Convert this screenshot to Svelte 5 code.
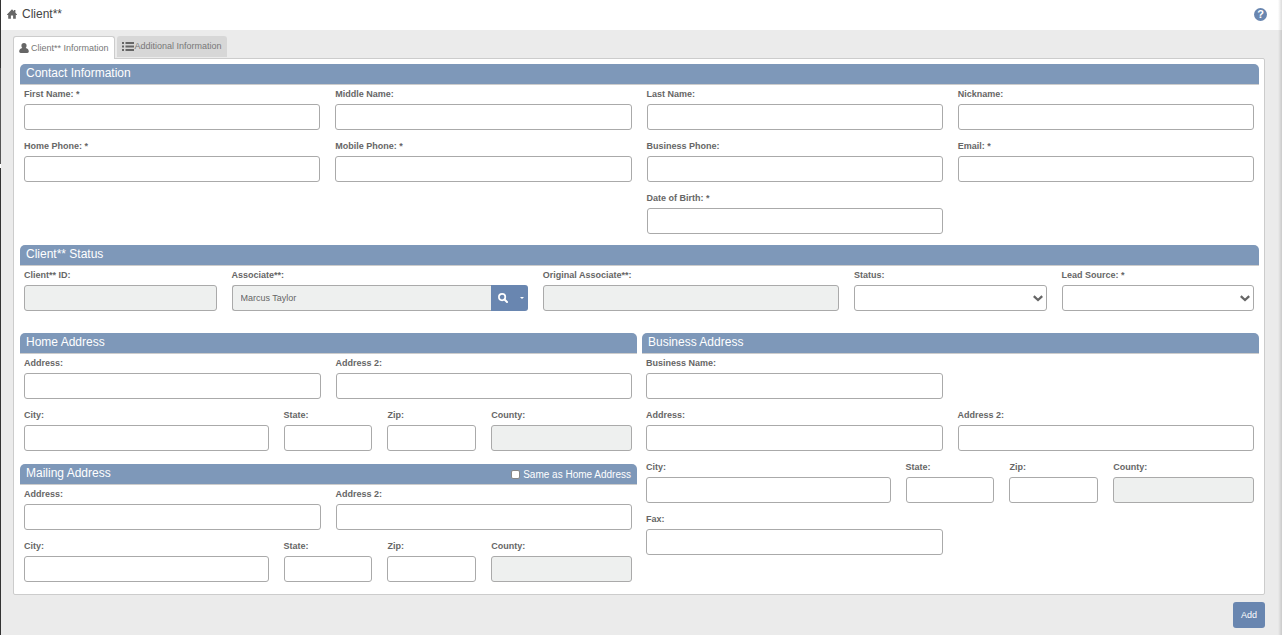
<script lang="ts">
    type Field = {
        id: string;
        label: string;
        span: number;
        start?: number;
        kind?: "text" | "readonly" | "select" | "lookup";
        value?: string;
    };

    const contactFields: Field[] = [
        { id: "first-name", label: "First Name: *", span: 6 },
        { id: "middle-name", label: "Middle Name:", span: 6 },
        { id: "last-name", label: "Last Name:", span: 6 },
        { id: "nickname", label: "Nickname:", span: 6 },
        { id: "home-phone", label: "Home Phone: *", span: 6 },
        { id: "mobile-phone", label: "Mobile Phone: *", span: 6 },
        { id: "business-phone", label: "Business Phone:", span: 6 },
        { id: "email", label: "Email: *", span: 6 },
        { id: "birth-date", label: "Date of Birth: *", span: 6, start: 13 },
    ];

    const statusFields: Field[] = [
        { id: "client-id", label: "Client** ID:", span: 4, kind: "readonly" },
        { id: "associate", label: "Associate**:", span: 6, kind: "lookup", value: "Marcus Taylor" },
        { id: "original-associate", label: "Original Associate**:", span: 6, kind: "readonly" },
        { id: "status", label: "Status:", span: 4, kind: "select" },
        { id: "lead-source", label: "Lead Source: *", span: 4, kind: "select" },
    ];

    function cityFields(prefix: string): Field[] {
        return [
            { id: prefix + "-city", label: "City:", span: 5 },
            { id: prefix + "-state", label: "State:", span: 2 },
            { id: prefix + "-zip", label: "Zip:", span: 2 },
            { id: prefix + "-county", label: "County:", span: 3, kind: "readonly" },
        ];
    }

    function addressFields(prefix: string): Field[] {
        return [
            { id: prefix + "-address", label: "Address:", span: 6 },
            { id: prefix + "-address2", label: "Address 2:", span: 6 },
            ...cityFields(prefix),
        ];
    }

    const businessFields: Field[] = [
        { id: "business-name", label: "Business Name:", span: 6 },
        { id: "business-address", label: "Address:", span: 6, start: 1 },
        { id: "business-address2", label: "Address 2:", span: 6 },
        ...cityFields("business"),
        { id: "business-fax", label: "Fax:", span: 6 },
    ];

    let activeTab = $state("client");
    let sameAsHome = $state(false);
</script>

{#snippet fieldGrid(fields: Field[], columns: number)}
    <div class="fields" style="--columns: {columns}">
        {#each fields as field (field.id)}
            <div class="field" style="grid-column: {field.start ?? 'auto'} / span {field.span}">
                <label for={field.id}>{field.label}</label>
                {#if field.kind === "select"}
                    <div class="select">
                        <select id={field.id}>
                            <option value=""></option>
                        </select>
                        <svg viewBox="0 0 10 7" aria-hidden="true">
                            <path d="M.8 1.2 5 5 9.2 1.2" fill="none" stroke="#666" stroke-width="2.3" />
                        </svg>
                    </div>
                {:else if field.kind === "lookup"}
                    <div class="lookup">
                        <input id={field.id} type="text" value={field.value} readonly />
                        <button type="button" class="search" aria-label="Search">
                            <svg viewBox="0 0 10 10" aria-hidden="true">
                                <circle cx="4.1" cy="4.1" r="3.2" fill="none" stroke="#fff" stroke-width="1.7" />
                                <path d="M6.5 6.5 9 9" stroke="#fff" stroke-width="2" stroke-linecap="round" />
                            </svg>
                        </button>
                        <button type="button" class="more" aria-label="More options">
                            <svg viewBox="0 0 4 2" aria-hidden="true">
                                <path d="M0 0h4L2 2z" fill="#fff" />
                            </svg>
                        </button>
                    </div>
                {:else}
                    <input id={field.id} type="text" value={field.value ?? ""} readonly={field.kind === "readonly"} />
                {/if}
            </div>
        {/each}
    </div>
{/snippet}

<div class="page">
    <header>
        <svg class="home" viewBox="0 0 10 10" aria-hidden="true">
            <path d="M5 .3 6.9 2.2V1h1.5v2.7L10 5.4V6H8.8v3.7H6.1V6.5H3.9v3.2H1.2V6H0v-.6z" fill="#666" />
        </svg>
        <h1>Client**</h1>
        <button type="button" class="help" aria-label="Help">?</button>
    </header>

    <main>
        <div class="tabs" role="tablist">
            <button type="button" role="tab" class:active={activeTab === "client"} aria-selected={activeTab === "client"} onclick={() => (activeTab = "client")}>
                <svg class="user" viewBox="0 0 10 10" aria-hidden="true">
                    <path d="M5 0C3.4 0 2.4 1.1 2.4 2.7c0 1 .3 1.8.9 2.4C1.2 5.6.2 6.7.2 8.6c0 .9.6 1.4 1.4 1.4h6.8c.8 0 1.4-.5 1.4-1.4 0-1.9-1-3-3.1-3.5.6-.6.9-1.4.9-2.4C7.6 1.1 6.6 0 5 0z" fill="#666" />
                </svg>
                Client** Information
            </button>
            <button type="button" role="tab" class:active={activeTab === "additional"} aria-selected={activeTab === "additional"} onclick={() => (activeTab = "additional")}>
                <svg class="list" viewBox="0 0 12 9" aria-hidden="true">
                    <path d="M0 0h2v2H0zM0 3.5h2v2H0zM0 7h2v2H0zM3.5 0H12v2H3.5zM3.5 3.5H12v2H3.5zM3.5 7H12v2H3.5z" fill="#666" />
                </svg>
                Additional Information
            </button>
        </div>

        <form class="panel" id="client-form">
            <section>
                <h2>Contact Information</h2>
                {@render fieldGrid(contactFields, 24)}
            </section>
            <section class="status">
                <h2>Client** Status</h2>
                {@render fieldGrid(statusFields, 24)}
            </section>
            <div class="addresses">
                <div>
                    <section>
                        <h2>Home Address</h2>
                        {@render fieldGrid(addressFields("home"), 12)}
                    </section>
                    <section class="mailing">
                        <div class="heading">
                            <h2>Mailing Address</h2>
                            <label class="same">
                                <input type="checkbox" bind:checked={sameAsHome} />
                                Same as Home Address
                            </label>
                        </div>
                        {@render fieldGrid(addressFields("mailing"), 12)}
                    </section>
                </div>
                <section>
                    <h2>Business Address</h2>
                    {@render fieldGrid(businessFields, 12)}
                </section>
            </div>
        </form>

        <footer>
            <button type="submit" form="client-form" class="add">Add</button>
        </footer>
    </main>
</div>

<style>
    :global(body) {
        margin: 0;
        background: #ebebeb;
    }

    .page {
        position: relative;
        box-sizing: border-box;
        min-height: 100vh;
        padding-left: 1px;
        background: linear-gradient(#333 68px, #555 68px, #555 164px, #fff 164px, #fff 168px, #333 168px) left / 1px 100% no-repeat;
        font-family: "Liberation Sans", Arial, sans-serif;
        font-size: 9px;
        color: #666;
    }

    /* shade along the right edge of the window */
    .page::after {
        content: "";
        position: absolute;
        top: 0;
        right: 0;
        bottom: 0;
        width: 4px;
        background: linear-gradient(to right, transparent, rgba(0, 0, 0, 0.14));
        pointer-events: none;
    }

    button, input, select {
        box-sizing: border-box;
        margin: 0;
        font: inherit;
        color: inherit;
    }

    button {
        border: 0;
        padding: 0;
        cursor: pointer;
    }

    header {
        display: flex;
        align-items: center;
        height: 30px;
        box-sizing: border-box;
        padding: 0 15px 2px 6px;
        background: #fff;
    }

    .home {
        width: 10px;
        height: 10px;
    }

    h1 {
        flex-grow: 1;
        margin: 0 0 0 5px;
        font-size: 12px;
        font-weight: normal;
        color: #444;
    }

    .help {
        width: 13px;
        height: 13px;
        border-radius: 50%;
        background: #6986b0;
        color: #fff;
        font-size: 11px;
        line-height: 13px;
        font-weight: bold;
    }

    main {
        padding: 6px 17px 7px 12px;
    }

    .tabs {
        display: flex;
        align-items: flex-start;
        gap: 2px;
    }

    .tabs button {
        display: flex;
        align-items: center;
        height: 21px;
        padding: 0 5px 1px;
        gap: 1px;
        background: #d7d7d7;
        border-radius: 3px 3px 0 0;
        color: #777;
    }

    .tabs button.active {
        position: relative;
        height: 23px;
        margin-bottom: -1px;
        padding: 0 5px 1px;
        gap: 2px;
        border: 1px solid #ccc;
        border-bottom: 0;
        background: #fff;
    }

    .user {
        width: 10px;
        height: 10px;
    }

    .list {
        width: 12px;
        height: 9px;
    }

    .panel {
        border: 1px solid #ccc;
        border-radius: 0 2px 2px 2px;
        padding: 5px 5px 12px 6px;
        background: #fff;
    }

    h2, .heading {
        box-sizing: border-box;
        height: 21px;
        margin: 0;
        padding: 0 6px;
        border-bottom: 1px solid #ccc;
        border-radius: 5px 5px 0 0;
        background: #7e98b9;
        color: #fff;
        font-size: 12px;
        line-height: 19px;
        font-weight: normal;
    }

    .heading {
        display: flex;
        justify-content: space-between;
    }

    .heading h2 {
        height: auto;
        padding: 0;
        border: 0;
        background: none;
    }

    .same {
        display: flex;
        align-items: center;
        gap: 3px;
        font-size: 10px;
    }

    .same input {
        appearance: none;
        width: 9px;
        height: 9px;
        border: 1px solid #888;
        border-radius: 2px;
        background: #fff;
    }

    .same input:checked {
        background: #444;
    }

    .fields {
        display: grid;
        grid-template-columns: repeat(var(--columns), minmax(0, 1fr));
        gap: 6px 15px;
        padding: 0 5px 0 4px;
    }

    .field label {
        display: block;
        height: 20px;
        line-height: 20px;
        font-weight: bold;
        white-space: nowrap;
    }

    /* the first row tucks in under the heading's border */
    .fields {
        margin-top: -1px;
    }

    .field input, .field select {
        display: block;
        width: 100%;
        height: 26px;
        padding: 0 8px;
        border: 1px solid #aaa;
        border-radius: 3px;
        background: #fff;
        outline-color: #6986b0;
    }

    .field input:read-only {
        background: #eef0ef;
    }

    .select {
        position: relative;
    }

    .select select {
        appearance: none;
    }

    .select svg {
        position: absolute;
        top: 10px;
        right: 4px;
        width: 10px;
        height: 7px;
        pointer-events: none;
    }

    .lookup {
        display: flex;
    }

    .lookup input {
        flex: 1;
        width: auto;
        min-width: 0;
        border-right: 0;
        border-radius: 3px 0 0 3px;
    }

    .lookup button {
        display: flex;
        align-items: center;
        justify-content: center;
        height: 26px;
        background: #6986b0;
    }

    .lookup .search {
        width: 25px;
    }

    .lookup .search svg {
        width: 10px;
        height: 10px;
    }

    .lookup .more {
        width: 12px;
        border-radius: 0 3px 3px 0;
    }

    .lookup .more svg {
        width: 4px;
        height: 2px;
    }

    .status {
        margin-top: 11px;
    }

    .addresses {
        display: grid;
        grid-template-columns: 1fr 1fr;
        gap: 5px;
        margin-top: 22px;
    }

    .mailing {
        margin-top: 13px;
    }

    footer {
        display: flex;
        justify-content: flex-end;
        margin-top: 7px;
    }

    .add {
        height: 26px;
        padding: 0 8px;
        border-radius: 3px;
        background: #6986b0;
        color: #fff;
    }
</style>
